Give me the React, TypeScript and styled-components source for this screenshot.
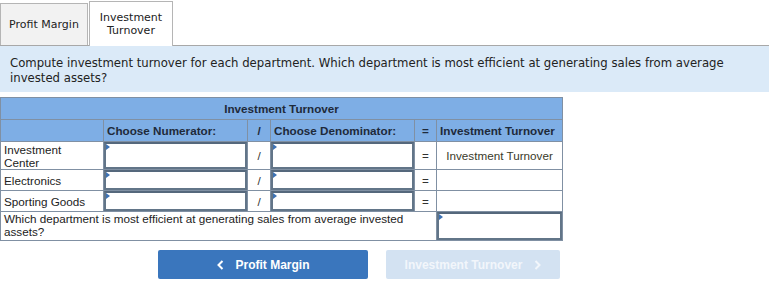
import React from 'react';
import styled, { createGlobalStyle } from 'styled-components';

const GlobalStyle = createGlobalStyle`
    body {
        margin: 0;
        background: #ffffff;
        font-family: "Liberation Sans", Arial, sans-serif;
    }
`;

const Page = styled.div`
    width: 769px;
    height: 283px;
    overflow: hidden;
`;

const Tabs = styled.div`
    display: flex;
    align-items: flex-end;
    height: 46px;
    border-bottom: 1px solid #a8a8a8;
    box-sizing: border-box;
`;

const Tab = styled.div<{ active?: boolean }>`
    display: flex;
    align-items: center;
    justify-content: center;
    text-align: center;
    box-sizing: border-box;
    font-family: "DejaVu Sans", Verdana, sans-serif;
    font-size: 11px;
    line-height: 13px;
    color: #222;
    border: 1px solid #b5b5b5;
    border-bottom: none;
    background: ${({ active }) => (active ? '#ffffff' : '#f2f2f2')};
    height: ${({ active }) => (active ? '45px' : '42px')};
    width: ${({ active }) => (active ? '84px' : '88px')};
    margin-bottom: ${({ active }) => (active ? '-1px' : '0')};
    margin-left: ${({ active }) => (active ? '1px' : '0')};
`;

const Prompt = styled.div`
    background: #dbeaf8;
    padding: 10px 10px 7px 10px;
    height: 46px;
    box-sizing: border-box;
    font-family: "DejaVu Sans", Verdana, sans-serif;
    font-size: 11.7px;
    line-height: 15px;
    color: #222;
`;

const TableWrap = styled.div`
    padding-top: 5px;
`;

const Grid = styled.table`
    border-collapse: collapse;
    width: 562px;
    table-layout: fixed;
    font-size: 11.7px;
    color: #222;

    td, th {
        border: 1px solid #8090a3;
        padding: 0;
    }
`;

const HeadCell = styled.th<{ align?: string }>`
    background: #7eaee5;
    font-weight: bold;
    height: 21px;
    text-align: ${({ align }) => align || 'left'};
    padding: 0 3px !important;
    color: #1e2a3a;
`;

const Label = styled.td`
    padding: 0 3px !important;
    line-height: 13px;
`;

const Op = styled.td`
    text-align: center;
    color: #333;
`;

const InputCell = styled.td`
    position: relative;
`;

const InputBox = styled.div<{ h: number }>`
    position: relative;
    height: ${({ h }) => h}px;
    border: 2px solid #627588;
    border-top-color: #55687c;
    box-sizing: border-box;
    background: #fff;

    &::before {
        content: '';
        position: absolute;
        left: 0;
        top: 0;
        border-left: 4px solid #3d72b4;
        border-top: 3px solid transparent;
        border-bottom: 3px solid transparent;
    }
`;

const Result = styled.td`
    text-align: center;
    color: #3a3a2a;
`;

const Buttons = styled.div`
    display: flex;
    padding: 9px 0 0 158px;
    gap: 18px;
`;

const NavButton = styled.div<{ disabled?: boolean }>`
    height: 29px;
    width: ${({ disabled }) => (disabled ? '174px' : '210px')};
    display: flex;
    align-items: center;
    justify-content: center;
    gap: 12px;
    border-radius: 2px;
    background: ${({ disabled }) => (disabled ? '#d3e2f2' : '#3a76bd')};
    color: ${({ disabled }) => (disabled ? '#f2f6fb' : '#ffffff')};
    font-weight: bold;
    font-size: 12px;
`;

const rows = [
    { name: 'Investment Center', h: 27, result: 'Investment Turnover', twoLine: true },
    { name: 'Electronics', h: 20, result: '' },
    { name: 'Sporting Goods', h: 20, result: '' },
];

const Chevron: React.FC<{ dir: 'left' | 'right' }> = ({ dir }) => (
    <svg width="7" height="10" viewBox="0 0 7 10">
        <path
            d={dir === 'left' ? 'M5.5 1 L1.5 5 L5.5 9' : 'M1.5 1 L5.5 5 L1.5 9'}
            fill="none"
            stroke="currentColor"
            strokeWidth="2"
        />
    </svg>
);

export default function App() {
    return (
        <Page>
            <GlobalStyle />
            <Tabs>
                <Tab>Profit Margin</Tab>
                <Tab active>Investment<br />Turnover</Tab>
            </Tabs>
            <Prompt>
                Compute investment turnover for each department. Which department is most efficient at generating sales from average invested assets?
            </Prompt>
            <TableWrap>
                <Grid>
                    <colgroup>
                        <col style={{ width: 103 }} />
                        <col style={{ width: 144 }} />
                        <col style={{ width: 23 }} />
                        <col style={{ width: 144 }} />
                        <col style={{ width: 22 }} />
                        <col style={{ width: 126 }} />
                    </colgroup>
                    <thead>
                        <tr>
                            <HeadCell colSpan={6} align="center">Investment Turnover</HeadCell>
                        </tr>
                        <tr>
                            <HeadCell />
                            <HeadCell>Choose Numerator:</HeadCell>
                            <HeadCell align="center">/</HeadCell>
                            <HeadCell>Choose Denominator:</HeadCell>
                            <HeadCell align="center">=</HeadCell>
                            <HeadCell>Investment Turnover</HeadCell>
                        </tr>
                    </thead>
                    <tbody>
                        {rows.map((r) => (
                            <tr key={r.name}>
                                <Label>{r.twoLine ? <>Investment<br />Center</> : r.name}</Label>
                                <InputCell><InputBox h={r.h} /></InputCell>
                                <Op>/</Op>
                                <InputCell><InputBox h={r.h} /></InputCell>
                                <Op>=</Op>
                                <Result>{r.result}</Result>
                            </tr>
                        ))}
                        <tr>
                            <Label colSpan={5} style={{ verticalAlign: 'top', paddingTop: 1 }}>
                                Which department is most efficient at generating sales from average invested<br />assets?
                            </Label>
                            <InputCell><InputBox h={28} /></InputCell>
                        </tr>
                    </tbody>
                </Grid>
            </TableWrap>
            <Buttons>
                <NavButton><Chevron dir="left" />Profit Margin</NavButton>
                <NavButton disabled>Investment Turnover<Chevron dir="right" /></NavButton>
            </Buttons>
        </Page>
    );
}
